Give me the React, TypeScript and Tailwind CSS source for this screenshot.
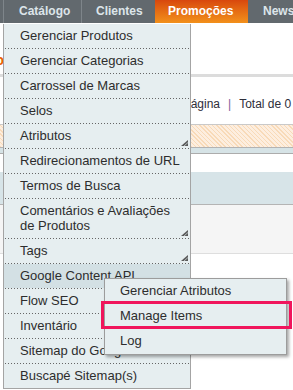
import type { ReactNode } from "react"

const items: { label: ReactNode; tall?: boolean; arrow?: boolean; active?: boolean }[] = [
  { label: "Gerenciar Produtos" },
  { label: "Gerenciar Categorias" },
  { label: "Carrossel de Marcas" },
  { label: "Selos" },
  { label: "Atributos", arrow: true },
  { label: "Redirecionamentos de URL" },
  { label: "Termos de Busca" },
  {
    label: (
      <>
        Comentários e Avaliações
        <br />
        de Produtos
      </>
    ),
    tall: true,
    arrow: true,
  },
  { label: "Tags", arrow: true },
  { label: "Google Content API", active: true, arrow: true },
  { label: "Flow SEO" },
  { label: "Inventário" },
  { label: "Sitemap do Google" },
  { label: "Buscapé Sitemap(s)" },
]

const subItems = ["Gerenciar Atributos", "Manage Items", "Log"]

function Dots() {
  return (
    <div className="mx-[1px] h-px shrink-0 bg-[linear-gradient(to_right,#666_1px,transparent_1px)] bg-[length:3px_1px]" />
  )
}

function Corner() {
  return (
    <svg
      width="7"
      height="6"
      viewBox="0 0 7 6"
      className="absolute right-[2px] bottom-[2px]"
    >
      <polygon points="0,6 7,0 7,6" fill="#5a5a5a" />
      <line x1="3" y1="6" x2="7" y2="2.5" stroke="#c9d3d6" strokeWidth="0.8" />
    </svg>
  )
}

function Tab({
  children,
  className,
}: {
  children: ReactNode
  className: string
}) {
  return (
    <div
      className={`flex h-full shrink-0 items-start pt-[2px] font-bold text-[12px] leading-[18px] ${className}`}
    >
      {children}
    </div>
  )
}

export default function App() {
  return (
    <div className="relative h-[390px] w-[293px] overflow-hidden bg-white font-['Liberation_Sans',Arial,sans-serif]">
      {/* top nav */}
      <div className="flex h-[23px] bg-[#62696e]">
        <div className="w-[3px] shrink-0" />
        <Tab className="w-[78px] border-l border-[#7e858a] pl-[15px] text-[#dde5ea]">
          Catálogo
        </Tab>
        <Tab className="w-[74px] border-l border-[#7e858a] pl-[14px] text-[#dde5ea]">
          Clientes
        </Tab>
        <Tab className="w-[93px] bg-linear-to-b from-[#d8470d] to-[#f2901b] pl-[13px] text-white">
          Promoções
        </Tab>
        <Tab className="flex-1 pl-[15px] text-[#dde5ea] whitespace-nowrap">News</Tab>
      </div>

      {/* page behind the menu */}
      <div className="flex flex-col">
        <div className="flex h-[51px] items-start pt-[30px]">
          <div className="flex w-[4px] justify-end overflow-hidden font-bold text-[#eb5e00] text-[14px] leading-[14px]">
            o
          </div>
        </div>
        <div className="h-[3px] bg-[#dcdcdc]" />
        <div className="flex h-[47px] items-start whitespace-nowrap pt-[20px] pl-[184px] text-[#2e2e3a] text-[12px] leading-[14px]">
          página
          <span className="px-[8px] text-[#7d5a9c]">|</span>
          Total de 0 registros encontrados
        </div>
        <div className="h-px bg-[#c9c9c9]" />
        <div className="h-[22px] bg-[#fde9d2] bg-[repeating-linear-gradient(45deg,#f8dab8_0px,#f8dab8_1px,#fdeedf_1px,#fdeedf_3px)]" />
        <div className="h-px bg-[#b3b3b3]" />
        <div className="h-[5px] bg-[#d6e3e6]" />
        <div className="h-px bg-[#acacac]" />
        <div className="h-[18px] bg-white" />
        <div className="h-[32px] bg-[#d7e4e8]" />
        <div className="h-px bg-[#b4b4b4]" />
        <div className="h-[48px] bg-[#f5f5f5]" />
        <div className="h-px bg-[#dedede]" />
      </div>

      {/* dropdown */}
      <div className="absolute top-[24px] left-[3px] flex w-[188px] flex-col border-[#a4a4a4] border-x border-b bg-[#e6eef0] text-[#2d2d2d] text-[13px]">
        {items.map((item, i) => (
          <div key={i} className="flex flex-col">
            <div
              className={`relative whitespace-nowrap pl-[16px] ${
                item.tall ? "h-[39px] pt-[4px] leading-[15px]" : "h-[24px] leading-[23px]"
              } ${item.active ? "bg-[#d3e0e4]" : ""}`}
            >
              {item.label}
              {item.arrow && <Corner />}
            </div>
            {i < items.length - 1 && <Dots />}
          </div>
        ))}
      </div>

      {/* submenu */}
      <div className="absolute top-[278px] left-[104px] flex w-[183px] flex-col border border-[#9c9c9c] bg-[#e6eef0] text-[#2d2d2d] text-[13px] shadow-[2px_2px_3px_rgba(0,0,0,0.35)]">
        {subItems.map((label) => (
          <div key={label} className="h-[25px] pl-[15px] leading-[24px]">
            {label}
          </div>
        ))}
      </div>

      {/* highlight annotation */}
      <div className="absolute top-[301px] left-[101px] h-[28px] w-[191px] border-[#f0155c] border-[3px]" />
    </div>
  )
}
